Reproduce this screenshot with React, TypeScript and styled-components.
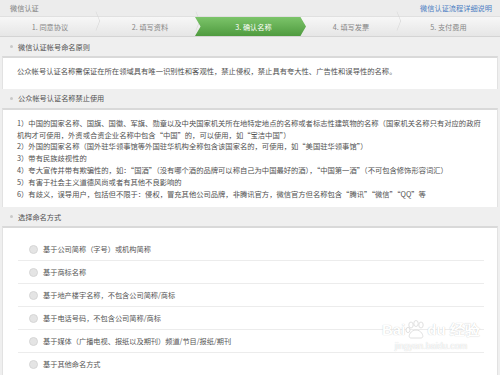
import React from "react";
import styled, { createGlobalStyle } from "styled-components";

const GlobalStyle = createGlobalStyle`
  html, body {
    margin: 0;
    padding: 0;
    background: #efefef;
  }
  body {
    font-family: "Noto Sans CJK SC", "Noto Sans", sans-serif;
    color: #555;
    overflow: hidden;
  }
`;

const steps = ["1. 同意协议", "2. 填写资料", "3. 确认名称", "4. 填写发票", "5. 支付费用"];

const rules = [
  "1）中国的国家名称、国旗、国徽、军旗、勋章以及中央国家机关所在地特定地点的名称或者标志性建筑物的名称（国家机关名称只有对应的政府",
  "机构才可使用，外资或合资企业名称中包含“中国”的，可以使用，如“宝洁中国”）",
  "2）外国的国家名称（国外驻华领事馆等外国驻华机构全称包含该国家名的，可使用，如“美国驻华领事馆”）",
  "3）带有民族歧视性的",
  "4）夸大宣传并带有欺骗性的，如：“国酒”（没有哪个酒的品牌可以称自己为中国最好的酒），“中国第一酒”（不可包含修饰形容词汇）",
  "5）有害于社会主义道德风尚或者有其他不良影响的",
  "6）有歧义，误导用户，包括但不限于：侵权，冒充其他公司品牌，非腾讯官方，微信官方但名称包含“腾讯”“微信”“QQ”等",
];

const options = [
  "基于公司简称（字号）或机构简称",
  "基于商标名称",
  "基于地产楼宇名称，不包含公司简称/商标",
  "基于电话号码，不包含公司简称/商标",
  "基于媒体（广播电视、报纸以及期刊）频道/节目/报纸/期刊",
  "基于其他命名方式",
];

const App: React.FC = () => {
  return (
    <Page>
      <GlobalStyle />
      <TitleBar>
        <span>微信认证</span>
        <HelpLink>微信认证流程详细说明</HelpLink>
      </TitleBar>
      <StepBar>
        {steps.map((s, i) => (
          <Step key={i} $active={i === 2} $last={i === steps.length - 1}>
            {s}
          </Step>
        ))}
      </StepBar>

      <Heading>微信认证帐号命名原则</Heading>
      <Box $pad="8px 14px 11px">
        <Line>公众帐号认证名称需保证在所在领域具有唯一识别性和客观性，禁止侵权，禁止具有夸大性、广告性和误导性的名称。</Line>
      </Box>

      <Heading>公众帐号认证名称禁止使用</Heading>
      <Box $pad="8px 14px 7px">
        {rules.map((r, i) => (
          <Line key={i}>{r}</Line>
        ))}
      </Box>

      <Heading>选择命名方式</Heading>
      <Box $pad="10px 13px 0 15px">
        {options.map((o, i) => (
          <Option key={i}>
            <Radio />
            <span>{o}</span>
          </Option>
        ))}
      </Box>

      <Watermark>
        <WaterLogo>
          Bai
          <svg width="22" height="20" viewBox="0 0 22 20">
            <g fill="#fff" stroke="#d8d8d8" strokeWidth="0.8">
              <ellipse cx="6" cy="5" rx="2.2" ry="3" />
              <ellipse cx="11" cy="3.5" rx="2.2" ry="3" />
              <ellipse cx="16" cy="5" rx="2.2" ry="3" />
              <ellipse cx="3" cy="10" rx="2" ry="2.6" />
              <path d="M6 18 C2 18 5 10 11 10 C17 10 20 18 16 18 C13 18 9 18 6 18 Z" />
            </g>
          </svg>
          du 经验
        </WaterLogo>
        <WaterUrl>jingyan.baidu.com</WaterUrl>
      </Watermark>
    </Page>
  );
};

export default App;

const Page = styled.div`
  position: relative;
  width: 500px;
  height: 375px;
  overflow: hidden;
  background: #efefef;
`;

const TitleBar = styled.div`
  height: 16px;
  display: flex;
  align-items: center;
  justify-content: space-between;
  padding: 0 8px 0 10px;
  background: #ececec;
  font-size: 7.2px;
  color: #808080;
`;

const HelpLink = styled.a`
  color: #4a7cc2;
  cursor: pointer;
`;

const StepBar = styled.div`
  height: 19px;
  display: flex;
  background: linear-gradient(#f7f7f7, #e6e6e6);
  border-top: 1px solid #e0e0e0;
  border-bottom: 1px solid #d4d4d4;
`;

const Step = styled.div<{ $active: boolean; $last: boolean }>`
  position: relative;
  flex: 0 0 ${(p) => (p.$last ? "95px" : p.$active ? "105px" : "100px")};
  margin-left: ${(p) => (p.$active ? "-5px" : "0")};
  margin-right: ${(p) => (p.$active ? "-5px" : "0")};
  display: flex;
  align-items: center;
  justify-content: center;
  font-size: 7.2px;
  color: ${(p) => (p.$active ? "#fff" : "#858585")};
  z-index: ${(p) => (p.$active ? 1 : 0)};
  ${(p) =>
    p.$active
      ? `
    background: linear-gradient(#7cc46a, #4f9b3f);
    clip-path: polygon(0 0, 95% 0, 100% 50%, 95% 100%, 0 100%, 5% 50%);
    padding-left: 6px;
  `
      : ""}

  &::after {
    content: "";
    display: ${(p) => (p.$last || p.$active ? "none" : "block")};
    position: absolute;
    right: 2px;
    top: 2px;
    width: 13px;
    height: 13px;
    border-top: 1px solid #d6d6d6;
    border-right: 1px solid #d6d6d6;
    transform: scaleX(0.4) rotate(45deg);
    transform-origin: right center;
  }
`;

const Heading = styled.div`
  height: 19px;
  display: flex;
  align-items: center;
  padding-left: 10px;
  font-size: 7.2px;
  color: #505050;
  background: #efefef;

  &::before {
    content: "";
    width: 3px;
    height: 3px;
    border-radius: 50%;
    background: #c8c8c8;
    margin-right: 5px;
  }
`;

const Box = styled.div<{ $pad: string }>`
  margin: 0 2px;
  padding: ${(p) => p.$pad};
  background: #fff;
  border-top: 2px solid #d9d9d9;
  border-left: 1px solid #e2e2e2;
  border-right: 1px solid #e2e2e2;
`;

const Line = styled.div`
  font-size: 7.3px;
  line-height: 11.8px;
  color: #505050;
  white-space: nowrap;
`;

const Option = styled.div`
  height: 22px;
  display: flex;
  align-items: center;
  padding-left: 11px;
  font-size: 7.2px;
  color: #555;
  border-bottom: 1px solid #ececec;

  &:last-child {
    border-bottom: none;
  }
`;

const Radio = styled.span`
  width: 7px;
  height: 7px;
  border-radius: 50%;
  background: #e4e4e4;
  border: 0.5px solid #d6d6d6;
  margin-right: 5px;
  flex: none;
`;

const Watermark = styled.div`
  position: absolute;
  left: 382px;
  top: 320px;
  display: flex;
  flex-direction: column;
  align-items: center;
  color: #fff;
  font-family: "Liberation Sans", sans-serif;
  text-shadow: 0 0 1px #bdbdbd;
  pointer-events: none;
`;

const WaterLogo = styled.div`
  display: flex;
  align-items: center;
  font-size: 15px;
  font-weight: bold;
  line-height: 20px;
`;

const WaterUrl = styled.div`
  font-size: 9px;
  margin-top: 1px;
`;
